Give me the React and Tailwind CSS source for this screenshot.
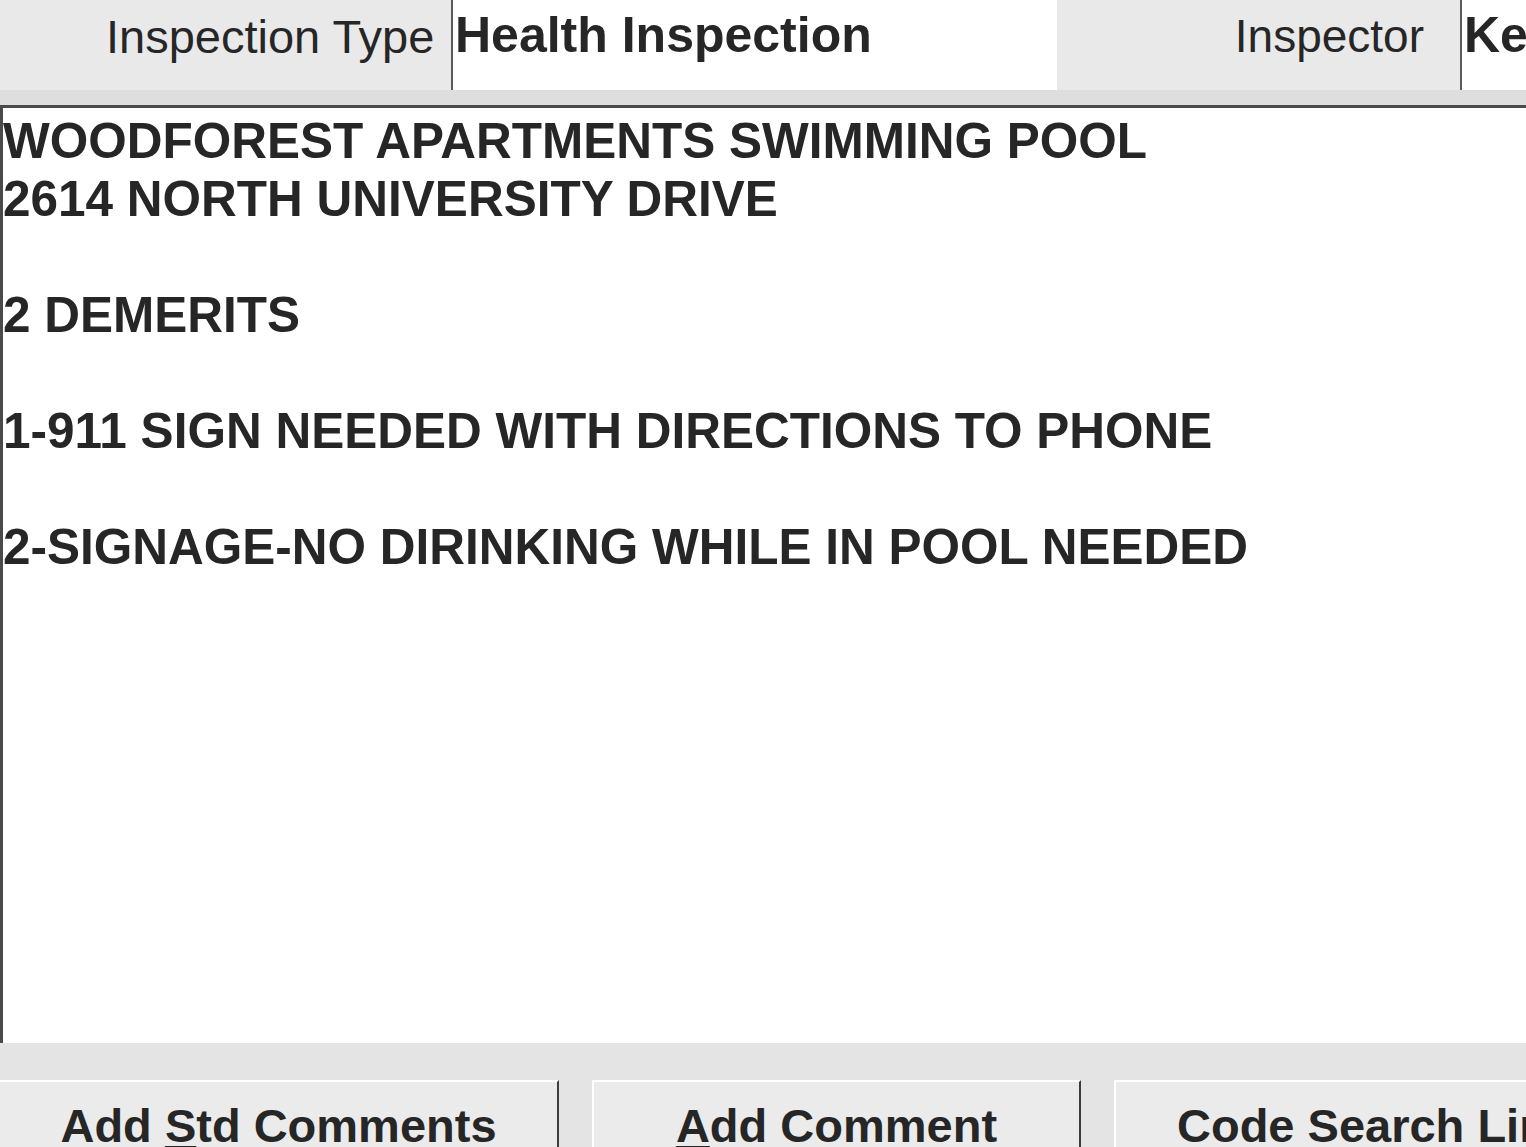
import React from 'react';

const lines = [
  'WOODFOREST APARTMENTS SWIMMING POOL',
  '2614 NORTH UNIVERSITY DRIVE',
  '',
  '2 DEMERITS',
  '',
  '1-911 SIGN NEEDED WITH DIRECTIONS TO PHONE',
  '',
  '2-SIGNAGE-NO DIRINKING WHILE IN POOL NEEDED',
];

function App() {
  return (
    <div
      className="w-[1526px] h-[1147px] overflow-hidden bg-[#e9e9e9] flex flex-col text-[#262626]"
      style={{ fontFamily: '"Liberation Sans", Arial, sans-serif' }}
    >
      {/* Header fields */}
      <div className="h-[105px] shrink-0 flex flex-col">
        <div className="h-[90px] flex items-start">
          <div className="w-[451px] pl-[106px] pt-[13px] text-[47px] leading-none whitespace-nowrap">
            Inspection Type
          </div>
          <div className="w-[606px] h-[90px] bg-white border-l-2 border-[#5a5a5a] pl-[2px] pt-[10px] text-[50px] font-bold leading-none whitespace-nowrap">
            Health Inspection
          </div>
          <div className="w-[403px] pt-[13px] pr-[36px] text-right text-[46px] leading-none whitespace-nowrap">
            Inspector
          </div>
          <div className="flex-1 h-[90px] bg-white border-l-2 border-[#5a5a5a] pl-[2px] pt-[10px] text-[50px] font-bold leading-none whitespace-nowrap overflow-hidden">
            Ke
          </div>
        </div>
        <div className="flex-1 bg-[#dedede]" />
      </div>

      {/* Comment area */}
      <div className="h-[938px] shrink-0 bg-white border-t-[3px] border-l-[3px] border-[#4a4a4a] pt-[4px] pl-0">
        {lines.map((line, i) => (
          <div key={i} className="h-[58px] text-[49.5px] font-bold leading-[58px] whitespace-nowrap">
            {line}
          </div>
        ))}
      </div>

      {/* Buttons */}
      <div className="flex-1 pt-[37px] flex gap-[33px] bg-[#e4e4e4]">
        <div className="w-[559px] bg-[#ebebeb] border-t-2 border-white border-r-2 border-r-[#3c3c3c] pt-[20px] text-center text-[47px] font-bold leading-none whitespace-nowrap">
          Add <span className="underline underline-offset-[4px]">S</span>td Comments
        </div>
        <div className="w-[489px] bg-[#ebebeb] border-t-2 border-l-2 border-white border-r-2 border-r-[#3c3c3c] pt-[20px] text-center text-[47px] font-bold leading-none whitespace-nowrap">
          <span className="underline underline-offset-[4px]">A</span>dd Comment
        </div>
        <div className="flex-1 bg-[#ebebeb] border-t-2 border-l-2 border-white pt-[20px] pl-[61px] text-[47px] font-bold leading-none whitespace-nowrap overflow-hidden">
          Code Search Link
        </div>
      </div>
    </div>
  );
}

export default App;
